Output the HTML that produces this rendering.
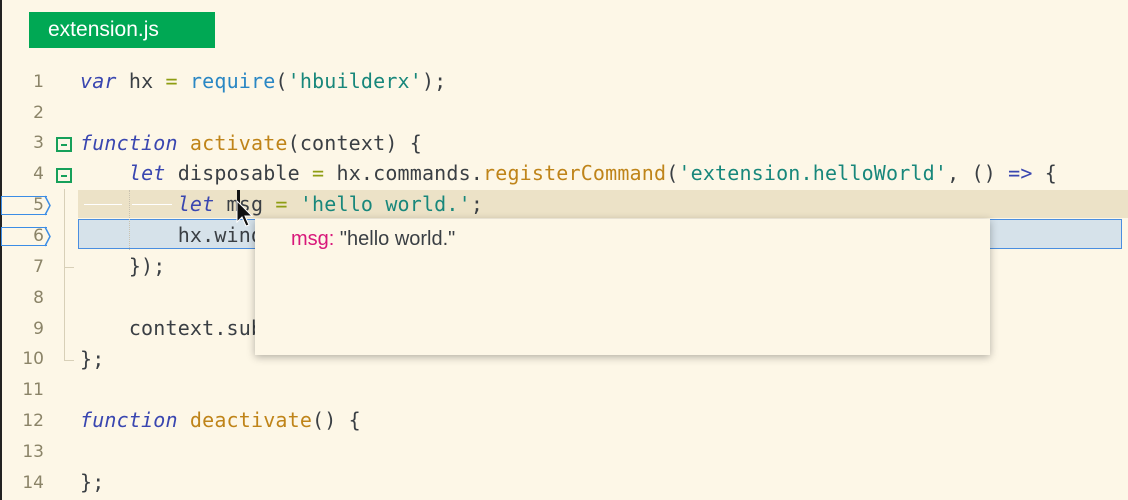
<!DOCTYPE html>
<html><head><meta charset="utf-8"><style>
html,body{margin:0;padding:0}
body{width:1128px;height:500px;background:#fdf7e7;position:relative;overflow:hidden;font-family:"DejaVu Sans Mono","Liberation Mono",monospace}
.tab{position:absolute;left:29px;top:12px;width:186px;height:36px;background:#00a854;color:#fff;font:21px "Liberation Sans",sans-serif;line-height:36px;padding-left:19px;box-sizing:border-box}
.ln{position:absolute;left:0;width:44px;text-align:right;color:#8b8468;font-size:17px;font-family:"DejaVu Sans",sans-serif;height:31px;line-height:31px}
.code{position:absolute;left:80px;font-size:20px;letter-spacing:0.17px;height:31px;line-height:31px;white-space:pre;color:#3a3f44}
.k{color:#3946b0;font-style:italic}
.f{color:#bf8419}
.s{color:#18877b}
.r{color:#2a87c4}
.o{color:#8e9d12}
.a{color:#3946b0}
.fold{position:absolute;left:56px;width:16px;height:15px;border:2px solid #16a05a;box-sizing:border-box}
.fold:after{content:"";position:absolute;left:3px;right:3px;top:4.5px;height:2px;background:#16a05a}
</style></head><body>
<div style="position:absolute;left:0;top:0;width:2px;height:500px;background:#222"></div>
<div class="tab">extension.js</div>

<div style="position:absolute;left:78px;top:190px;width:1050px;height:28px;background:#ece2c7"></div>
<div style="position:absolute;left:78px;top:219px;width:1044px;height:30px;background:#d6e2ea;border:1.5px solid #4a8ee0;box-sizing:border-box"></div>
<div style="position:absolute;left:1px;top:196px;width:46px;height:19px;border:1.5px solid #3b8de6;border-right:none;box-sizing:border-box"></div>
<div style="position:absolute;left:1px;top:227px;width:46px;height:19px;border:1.5px solid #3b8de6;border-right:none;box-sizing:border-box"></div>
<svg style="position:absolute;left:44px;top:195px" width="8" height="52"><path d="M1 1 L6 10.5 L1 20 M1 32 L6 41.5 L1 51" fill="none" stroke="#3b8de6" stroke-width="1.5"/></svg>
<div style="position:absolute;left:64px;top:189px;width:1px;height:172px;background:#d8d0b8"></div>
<div style="position:absolute;left:64px;top:267px;width:10px;height:1px;background:#d8d0b8"></div>
<div style="position:absolute;left:64px;top:360px;width:10px;height:1px;background:#d8d0b8"></div>
<div style="position:absolute;left:129px;top:190px;width:0;height:60px;border-left:1px dotted #c9c2b0"></div>
<div style="position:absolute;left:84px;top:204px;width:38px;height:1px;background:#fff"></div>
<div style="position:absolute;left:132px;top:204px;width:40px;height:1px;background:#fff"></div>

<div class="ln" style="top:67px">1</div>
<div class="ln" style="top:98px">2</div>
<div class="ln" style="top:128px">3</div>
<div class="ln" style="top:159px">4</div>
<div class="ln" style="top:190px">5</div>
<div class="ln" style="top:221px">6</div>
<div class="ln" style="top:252px">7</div>
<div class="ln" style="top:283px">8</div>
<div class="ln" style="top:314px">9</div>
<div class="ln" style="top:344px">10</div>
<div class="ln" style="top:375px">11</div>
<div class="ln" style="top:406px">12</div>
<div class="ln" style="top:437px">13</div>
<div class="ln" style="top:468px">14</div>
<div class="fold" style="top:137px"></div>
<div class="fold" style="top:168px"></div>

<div class="code" style="top:66px"><span class="k">var</span> hx <span class="o">=</span> <span class="r">require</span>(<span class="s">'hbuilderx'</span>);</div>
<div class="code" style="top:128px"><span class="k">function</span> <span class="f">activate</span>(context) {</div>
<div class="code" style="top:158px">    <span class="k">let</span> disposable <span class="o">=</span> hx.commands.<span class="f">registerCommand</span>(<span class="s">'extension.helloWorld'</span>, () <span class="a">=&gt;</span> {</div>
<div class="code" style="top:189px">        <span class="k">let</span> msg <span class="o">=</span> <span class="s">'hello world.'</span>;</div>
<div class="code" style="top:220px">        hx.window.showInformationMessage(msg);</div>
<div class="code" style="top:251px">    });</div>
<div class="code" style="top:313px">    context.subscriptions.push(disposable);</div>
<div class="code" style="top:344px">};</div>
<div class="code" style="top:405px"><span class="k">function</span> <span class="f">deactivate</span>() {</div>
<div class="code" style="top:467px">};</div>

<div style="position:absolute;left:255px;top:219px;width:735px;height:136px;background:#fdf7e7;box-shadow:0 2px 8px rgba(0,0,0,0.3)">
<div style="position:absolute;left:36px;top:9px;font:20px 'Liberation Sans',sans-serif;color:#3a3f44"><span style="color:#d8187a">msg:</span> "hello world."</div>
</div>

<div style="position:absolute;left:237px;top:190px;width:3px;height:20px;background:#111"></div>
<svg style="position:absolute;left:236px;top:200px" width="20" height="28"><path d="M1 1 L1 22 L6 17 L10 26 L13 25 L9 16 L16 16 Z" fill="#111" stroke="#fff" stroke-width="1"/></svg>
</body></html>
